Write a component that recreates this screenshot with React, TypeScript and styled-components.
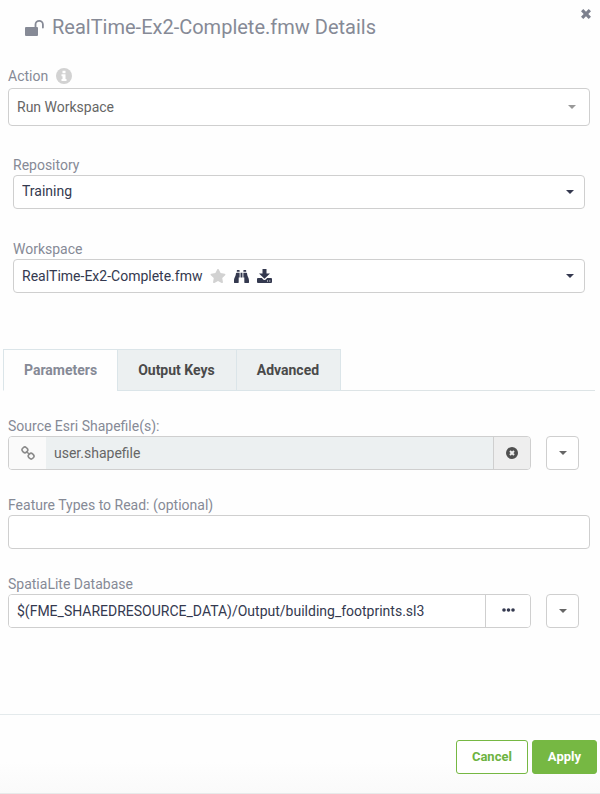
import React, { useState } from "react";
import styled, { createGlobalStyle } from "styled-components";
import { FaBinoculars, FaStar } from "react-icons/fa";

const GlobalStyle = createGlobalStyle`
  *, *::before, *::after { box-sizing: border-box; }
  body {
    margin: 0;
    background: #fefefe;
    color: #34394f;
    font: 14px/20px Roboto, "Liberation Sans", sans-serif;
  }
  button, input, select { font: inherit; color: inherit; margin: 0; }
`;

const Dialog = styled.main`
  display: flex;
  flex-direction: column;
  min-height: 100vh;
  border-bottom: 1px solid #e8eaea;
`;

const Header = styled.header`
  display: flex;
  justify-content: space-between;
  align-items: flex-start;
  padding: 8px 8px 0 25px;
`;

const Title = styled.h1`
  display: flex;
  align-items: center;
  gap: 8px;
  margin: 4px 0 0;
  font-size: 20px;
  line-height: 30px;
  font-weight: 400;
  color: #868a96;
`;

const PlainButton = styled.button`
  display: flex;
  align-items: center;
  justify-content: center;
  padding: 0;
  border: 0;
  background: none;
  color: inherit;
  cursor: pointer;
`;

const CloseButton = styled(PlainButton)`
  width: 12px;
  height: 12px;
  color: #7d818e;
`;

const Field = styled.div<{ $top?: number; $inset?: boolean }>`
  display: flex;
  flex-direction: column;
  margin: ${(p) => p.$top ?? 0}px ${(p) => (p.$inset ? "15px 0 13px" : "10px 0 8px")};
`;

const LabelRow = styled.div`
  display: flex;
  align-items: center;
  gap: 8px;
  color: #868a96;
`;

const ActionRow = styled(LabelRow)`
  margin-bottom: 2px;
`;

const Frame = styled.div<{ $tall?: boolean; $muted?: boolean }>`
  position: relative;
  height: ${(p) => (p.$tall ? 38 : 34)}px;
  color: ${(p) => (p.$muted ? "#666666" : "#34394f")};
`;

const Select = styled.select<{ $raised?: boolean }>`
  appearance: none;
  width: 100%;
  height: 100%;
  padding: 0 28px ${(p) => (p.$raised ? 2 : 0)}px 8px;
  border: 1px solid #cfcfcf;
  border-radius: 4px;
  background: #ffffff;
`;

const CaretSlot = styled.span<{ $muted?: boolean }>`
  position: absolute;
  top: 0;
  right: ${(p) => (p.$muted ? 14 : 11)}px;
  height: 100%;
  display: flex;
  align-items: center;
  pointer-events: none;
  color: ${(p) => (p.$muted ? "#999999" : "#34394f")};
`;

const InlineTools = styled.div`
  position: absolute;
  top: 0;
  left: 197px;
  height: 100%;
  display: flex;
  align-items: center;
  gap: 8px;
`;

const Star = styled(PlainButton)`
  color: #d2d2d2;
`;

const Tabs = styled.div`
  display: flex;
  margin: 56px 5px 0 3px;
  border-bottom: 1px solid #dde4e6;
`;

const Tab = styled.button<{ $active: boolean }>`
  height: 42px;
  margin-bottom: -1px;
  padding: 0 20px;
  border: 1px solid #dbe5e9;
  border-right-width: 0;
  border-bottom-color: ${(p) => (p.$active ? "#fefefe" : "#dbe5e9")};
  background: ${(p) => (p.$active ? "#fefefe" : "#ecf0f1")};
  color: ${(p) => (p.$active ? "#868a96" : "#4a4a4a")};
  font-weight: 700;
  cursor: pointer;

  &:not(:first-child) { padding-right: 21px; }
  &:last-child { border-right-width: 1px; }
`;

const ControlRow = styled.div`
  display: flex;
  gap: 15px;
  margin-right: 11px;
`;

const Group = styled.div`
  flex: 1;
  min-width: 0;
  display: flex;
  height: 34px;
  border: 1px solid #cfcfcf;
  border-radius: 4px;
  overflow: hidden;
`;

const Addon = styled.span`
  flex: none;
  width: 37px;
  display: flex;
  align-items: center;
  justify-content: center;
  background: #fafafa;
  color: #8b8b8b;
`;

const GroupInput = styled.input`
  flex: 1;
  min-width: 0;
  padding: 0 8px;
  border: 0;
  background: #ffffff;

  &:read-only {
    background: #ecf0f1;
    color: #666666;
  }
`;

const GroupButton = styled(PlainButton)<{ $filled?: boolean }>`
  flex: none;
  width: ${(p) => (p.$filled ? 37 : 45)}px;
  padding-bottom: ${(p) => (p.$filled ? 0 : 2)}px;
  border-left: 1px solid #cfcfcf;
  background: ${(p) => (p.$filled ? "#eeeeee" : "#ffffff")};
  color: ${(p) => (p.$filled ? "#505050" : "#34394f")};
`;

const TextInput = styled.input`
  width: 100%;
  height: 34px;
  padding: 0 8px;
  border: 1px solid #cfcfcf;
  border-radius: 4px;
  background: #ffffff;
`;

const MenuButton = styled(PlainButton)`
  flex: none;
  width: 33px;
  height: 34px;
  border: 1px solid #cfcfcf;
  border-radius: 4px;
  background: #ffffff;
  color: #666666;
`;

const Footer = styled.footer`
  display: flex;
  justify-content: flex-end;
  gap: 4px;
  margin-top: auto;
  padding: 25px 3px 19px;
  border-top: 1px solid #e4eaec;
  background: linear-gradient(#fefefe 60%, #fafafa);
`;

const ActionButton = styled.button<{ $primary?: boolean }>`
  height: 34px;
  padding: 0 15px;
  border: 1px solid #76b843;
  border-radius: 3px;
  background: ${(p) => (p.$primary ? "#76b843" : "#ffffff")};
  color: ${(p) => (p.$primary ? "#ffffff" : "#6db33f")};
  font-size: 13px;
  font-weight: 700;
  cursor: pointer;
`;

const Caret = () => (
  <svg width="8" height="4" viewBox="0 0 8 4" fill="currentColor" aria-hidden="true">
    <path d="M0 0h8L4 4z" />
  </svg>
);

const UnlockIcon = () => (
  <svg width="19" height="17" viewBox="0 0 19 17" aria-hidden="true">
    <rect y="8" width="13" height="9" rx="1" fill="currentColor" />
    <path d="M10.500 8.500V5.500a3.700 3.700 0 0 1 7.400 0v3" fill="none" stroke="currentColor" strokeWidth="1.800" strokeLinecap="round" />
  </svg>
);

const CrossIcon = () => (
  <svg width="10" height="10" viewBox="0 0 10 10" fill="currentColor" aria-hidden="true">
    <path d="M2.3 0 5 2.7 7.7 0 10 2.3 7.3 5 10 7.7 7.7 10 5 7.3 2.3 10 0 7.7 2.7 5 0 2.3z" />
  </svg>
);

const InfoIcon = () => (
  <svg width="16" height="16" viewBox="0 0 16 16" role="img" aria-label="About this action">
    <circle cx="8" cy="8" r="8" fill="#d2d2d2" />
    <path d="M6.5 2.8h3v2.4h-3zM5.5 6.2h4v4.8h1v2h-5v-2h1V8.2h-1z" fill="#fff" />
  </svg>
);

const ClearIcon = () => (
  <svg width="12" height="12" viewBox="0 0 12 12" aria-hidden="true">
    <circle cx="6" cy="6" r="6" fill="currentColor" />
    <path d="m4 4 4 4m0-4L4 8" stroke="#eee" strokeWidth="2" />
  </svg>
);

const ChainIcon = () => (
  <svg width="14" height="14" viewBox="0 0 14 14" fill="none" stroke="currentColor" strokeWidth="1.6" aria-hidden="true">
    <rect x="1.200" y="1.300" width="5.400" height="5.200" rx="2.200" transform="rotate(45 3.900 3.900)" />
    <rect x="7.400" y="7.500" width="5.400" height="5.200" rx="2.200" transform="rotate(45 10.100 10.100)" />
    <path d="m5.300 5.300 3.400 3.400" />
  </svg>
);

const DownloadIcon = () => (
  <svg width="15" height="14" viewBox="0 0 15 14" fill="currentColor" aria-hidden="true">
    <path d="M5.5 0h4v4.5H13L7.5 9.7 2 4.5h3.5z" />
    <path
      fillRule="evenodd"
      d="M1 9h3.8l1.5 1.4q1.2 1 2.4 0L10.2 9H14q1 0 1 1v3q0 1-1 1H1q-1 0-1-1v-3q0-1 1-1zm9 2.5v1h1v-1zm2.3 0v1h1v-1z"
    />
  </svg>
);

const DotsIcon = () => (
  <svg width="13" height="4" viewBox="0 0 13 4" fill="currentColor" aria-hidden="true">
    <circle cx="2" cy="2" r="1.8" />
    <circle cx="6.5" cy="2" r="1.8" />
    <circle cx="11" cy="2" r="1.8" />
  </svg>
);

const tabNames = ["Parameters", "Output Keys", "Advanced"];

export default function App() {
  const [tab, setTab] = useState(tabNames[0]);
  const [source, setSource] = useState("user.shapefile");
  const [types, setTypes] = useState("");
  const [database, setDatabase] = useState("$(FME_SHAREDRESOURCE_DATA)/Output/building_footprints.sl3");

  return (
    <>
      <GlobalStyle />
      <Dialog>
        <Header>
          <Title>
            <UnlockIcon />
            RealTime-Ex2-Complete.fmw Details
          </Title>
          <CloseButton aria-label="Close"><CrossIcon /></CloseButton>
        </Header>

        <Field $top={24}>
          <ActionRow>
            <label htmlFor="action">Action</label>
            <InfoIcon />
          </ActionRow>
          <Frame $tall $muted>
            <Select id="action"><option>Run Workspace</option></Select>
            <CaretSlot $muted><Caret /></CaretSlot>
          </Frame>
        </Field>

        <Field $top={29} $inset>
          <LabelRow><label htmlFor="repository">Repository</label></LabelRow>
          <Frame>
            <Select id="repository" $raised><option>Training</option></Select>
            <CaretSlot><Caret /></CaretSlot>
          </Frame>
        </Field>

        <Field $top={30} $inset>
          <LabelRow><label htmlFor="workspace">Workspace</label></LabelRow>
          <Frame>
            <Select id="workspace"><option>RealTime-Ex2-Complete.fmw</option></Select>
            <InlineTools>
              <Star aria-label="Favorite"><FaStar size={16} /></Star>
              <PlainButton aria-label="Inspect"><FaBinoculars size={15} /></PlainButton>
              <PlainButton aria-label="Download"><DownloadIcon /></PlainButton>
            </InlineTools>
            <CaretSlot><Caret /></CaretSlot>
          </Frame>
        </Field>

        <Tabs role="tablist">
          {tabNames.map((name) => (
            <Tab key={name} role="tab" aria-selected={tab === name} $active={tab === name} onClick={() => setTab(name)}>
              {name}
            </Tab>
          ))}
        </Tabs>

        <Field $top={25}>
          <LabelRow><label htmlFor="source">Source Esri Shapefile(s):</label></LabelRow>
          <ControlRow>
            <Group>
              <Addon><ChainIcon /></Addon>
              <GroupInput id="source" value={source} readOnly />
              <GroupButton $filled aria-label="Clear source" onClick={() => setSource("")}><ClearIcon /></GroupButton>
            </Group>
            <MenuButton aria-label="Source options"><Caret /></MenuButton>
          </ControlRow>
        </Field>

        <Field $top={25}>
          <LabelRow><label htmlFor="types">Feature Types to Read: (optional)</label></LabelRow>
          <TextInput id="types" value={types} onChange={(e) => setTypes(e.target.value)} />
        </Field>

        <Field $top={25}>
          <LabelRow><label htmlFor="database">SpatiaLite Database</label></LabelRow>
          <ControlRow>
            <Group>
              <GroupInput id="database" value={database} onChange={(e) => setDatabase(e.target.value)} />
              <GroupButton aria-label="Browse"><DotsIcon /></GroupButton>
            </Group>
            <MenuButton aria-label="Database options"><Caret /></MenuButton>
          </ControlRow>
        </Field>

        <Footer>
          <ActionButton>Cancel</ActionButton>
          <ActionButton $primary>Apply</ActionButton>
        </Footer>
      </Dialog>
    </>
  );
}
